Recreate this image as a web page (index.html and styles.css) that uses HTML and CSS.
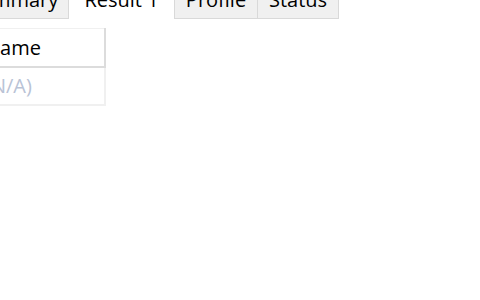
FILE: index.html
```html
<!DOCTYPE html>
<html lang="en">
<head>
  <meta charset="UTF-8">
  <title>Results</title>
  <link rel="stylesheet" href="styles.css">
</head>
<body>

<div class="tabs">
  <div class="tab tab-summary">Summary</div>
  <div class="tab tab-active">Result 1</div>
  <div class="tab tab-profile">Profile</div>
  <div class="tab tab-status">Status</div>
</div>

<table class="grid">
  <tr><th>Name</th></tr>
  <tr><td>(N/A)</td></tr>
</table>

</body>
</html>
```

FILE: styles.css
```css
body {
  margin: 0;
  background: #ffffff;
  font-family: "Open Sans", "Noto Sans", sans-serif;
  font-size: 20px;
  color: #000;
  overflow: hidden;
}
.tabs {
  display: flex;
  margin-top: -14px;
  margin-left: -41px;
}
.tab {
  box-sizing: border-box;
  height: 33px;
  line-height: 27px;
  text-align: center;
  background: #f0f0f0;
  border: 1px solid #d9d9d9;
  border-top: none;
  border-left: none;
}
.tab-summary {
  width: 110px;
}
.tab-active {
  width: 106px;
  background: #ffffff;
  border-bottom: none;
}
.tab-profile {
  width: 83px;
}
.tab-status {
  width: 81px;
}
.grid {
  border-collapse: collapse;
  margin-top: 9px;
  margin-left: -32px;
}
.grid th,
.grid td {
  box-sizing: border-box;
  width: 137px;
  padding: 0 0 0 17px;
  text-align: left;
  font-weight: normal;
  line-height: 27px;
}
.grid th {
  height: 38px;
  border-top: 1px solid #f0f0f0;
  border-right: 2px solid #dcdcdc;
  border-bottom: 2px solid #dcdcdc;
}
.grid td {
  height: 38px;
  color: #b9c3d6;
  border-right: 2px solid #f0f0f0;
  border-bottom: 2px solid #f0f0f0;
}
```
